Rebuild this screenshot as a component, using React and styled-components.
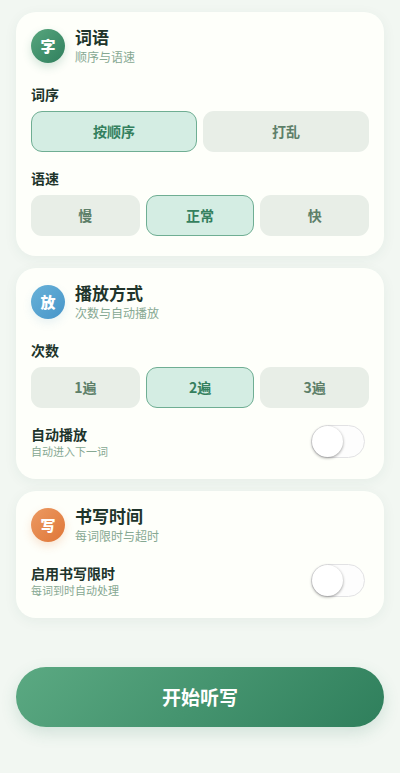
import React, { useState } from "react";
import styled, { createGlobalStyle } from "styled-components";

const orderOptions = ["按顺序", "打乱"];
const speedOptions = ["慢", "正常", "快"];
const repeatOptions = ["1遍", "2遍", "3遍"];

const OptionGroup = ({ label, options, value, onChange }) => (
  <Group role="group" aria-label={label}>
    <GroupLabel>{label}</GroupLabel>
    <Options>
      {options.map((option) => (
        <Option
          key={option}
          type="button"
          $active={option === value}
          aria-pressed={option === value}
          onClick={() => onChange(option)}
        >
          {option}
        </Option>
      ))}
    </Options>
  </Group>
);

const CardHeader = ({ badge, tone, title, subtitle }) => (
  <Header>
    <Badge $tone={tone}>{badge}</Badge>
    <div>
      <Title>{title}</Title>
      <Subtitle>{subtitle}</Subtitle>
    </div>
  </Header>
);

const SwitchRow = ({ id, label, hint, checked, onChange }) => (
  <Row>
    <label htmlFor={id}>
      <RowLabel>{label}</RowLabel>
      <RowHint>{hint}</RowHint>
    </label>
    <Switch
      id={id}
      type="checkbox"
      role="switch"
      checked={checked}
      onChange={(e) => onChange(e.target.checked)}
    />
  </Row>
);

const App = () => {
  const [order, setOrder] = useState("按顺序");
  const [speed, setSpeed] = useState("正常");
  const [repeat, setRepeat] = useState("2遍");
  const [autoPlay, setAutoPlay] = useState(false);
  const [timeLimit, setTimeLimit] = useState(false);

  return (
    <>
      <GlobalStyle />
      <Page>
        <Card>
          <CardHeader badge="字" tone="green" title="词语" subtitle="顺序与语速" />
          <OptionGroup label="词序" options={orderOptions} value={order} onChange={setOrder} />
          <OptionGroup label="语速" options={speedOptions} value={speed} onChange={setSpeed} />
        </Card>

        <Card>
          <CardHeader badge="放" tone="blue" title="播放方式" subtitle="次数与自动播放" />
          <OptionGroup label="次数" options={repeatOptions} value={repeat} onChange={setRepeat} />
          <SwitchRow
            id="auto-play"
            label="自动播放"
            hint="自动进入下一词"
            checked={autoPlay}
            onChange={setAutoPlay}
          />
        </Card>

        <Card>
          <CardHeader badge="写" tone="orange" title="书写时间" subtitle="每词限时与超时" />
          <SwitchRow
            id="time-limit"
            label="启用书写限时"
            hint="每词到时自动处理"
            checked={timeLimit}
            onChange={setTimeLimit}
          />
        </Card>

        <StartButton type="button">开始听写</StartButton>
      </Page>
    </>
  );
};

const tones = {
  green: { from: "#58a67e", to: "#2f7f5d", shadow: "rgba(47, 127, 93, 0.2)" },
  blue: { from: "#68b2d8", to: "#4795c9", shadow: "rgba(71, 149, 201, 0.12)" },
  orange: { from: "#ec9a62", to: "#df7638", shadow: "rgba(223, 118, 56, 0.2)" },
};

const GlobalStyle = createGlobalStyle`
  * {
    box-sizing: border-box;
  }

  body {
    margin: 0;
    background-color: #f2f7f2;
    color: #20342b;
    font-family: "Noto Sans CJK SC", sans-serif;
  }

  button {
    font-family: inherit;
    cursor: pointer;
  }
`;

const Page = styled.main`
  display: flex;
  flex-direction: column;
  gap: 12px;
  padding: 12px 16px 44px;
`;

const Card = styled.section`
  display: flex;
  flex-direction: column;
  gap: 16px;
  padding: 14px 15px 20px;
  border-radius: 20px;
  background-color: #fefffa;
  box-shadow: 0 3px 14px rgba(40, 90, 60, 0.06);
`;

const Header = styled.header`
  display: flex;
  align-items: center;
  gap: 10px;
  margin-bottom: 3px;
`;

const Badge = styled.span`
  display: flex;
  align-items: center;
  justify-content: center;
  flex-shrink: 0;
  width: 34px;
  height: 34px;
  border-radius: 50%;
  background: ${({ $tone }) => `linear-gradient(135deg, ${tones[$tone].from}, ${tones[$tone].to})`};
  box-shadow: 0 4px 10px ${({ $tone }) => tones[$tone].shadow};
  color: white;
  font-size: 15px;
  font-weight: 900;
`;

const Title = styled.h2`
  margin: 0;
  font-size: 17px;
  font-weight: 600;
  line-height: 22px;
`;

const Subtitle = styled.p`
  margin: 0;
  color: #86a892;
  font-size: 12px;
  line-height: 17px;
`;

const Group = styled.div`
  display: flex;
  flex-direction: column;
  gap: 7px;
`;

const GroupLabel = styled.span`
  font-size: 14px;
  font-weight: 600;
  line-height: 20px;
`;

const Options = styled.div`
  display: flex;
  gap: 6px;
`;

const Option = styled.button`
  flex: 1 1 0;
  height: 41px;
  padding: 0 0 2px;
  border: 1px solid ${({ $active }) => ($active ? "#6fae93" : "transparent")};
  border-radius: 11px;
  background-color: ${({ $active }) => ($active ? "#d4ede3" : "#e8eee7")};
  color: ${({ $active }) => ($active ? "#34805e" : "#5d7f69")};
  font-size: 14px;
  font-weight: 600;
`;

const Row = styled.div`
  display: flex;
  align-items: center;
  justify-content: space-between;
  padding-right: 4px;
`;

const RowLabel = styled.span`
  display: block;
  font-size: 14px;
  font-weight: 600;
  line-height: 20px;
`;

const RowHint = styled.span`
  display: block;
  color: #86a892;
  font-size: 11px;
  line-height: 15px;
`;

const Switch = styled.input`
  appearance: none;
  display: flex;
  width: 54px;
  height: 33px;
  margin: 0;
  border: 1px solid ${({ checked }) => (checked ? "#3f8f6b" : "#e2e2e4")};
  border-radius: 17px;
  background-color: ${({ checked }) => (checked ? "#3f8f6b" : "#fdfdfd")};
  justify-content: ${({ checked }) => (checked ? "flex-end" : "flex-start")};
  cursor: pointer;

  &::before {
    content: "";
    width: 31px;
    height: 31px;
    border-radius: 50%;
    background-color: white;
    box-shadow: 0 1px 3px rgba(0, 0, 0, 0.4);
  }
`;

const StartButton = styled.button`
  height: 60px;
  margin-top: 37px;
  padding: 0 0 2px;
  border: none;
  border-radius: 30px;
  background: linear-gradient(135deg, #5ba982, #2f7f5c);
  box-shadow: 0 6px 16px rgba(47, 127, 92, 0.17);
  color: white;
  font-size: 19px;
  font-weight: 700;
`;

export default App;
